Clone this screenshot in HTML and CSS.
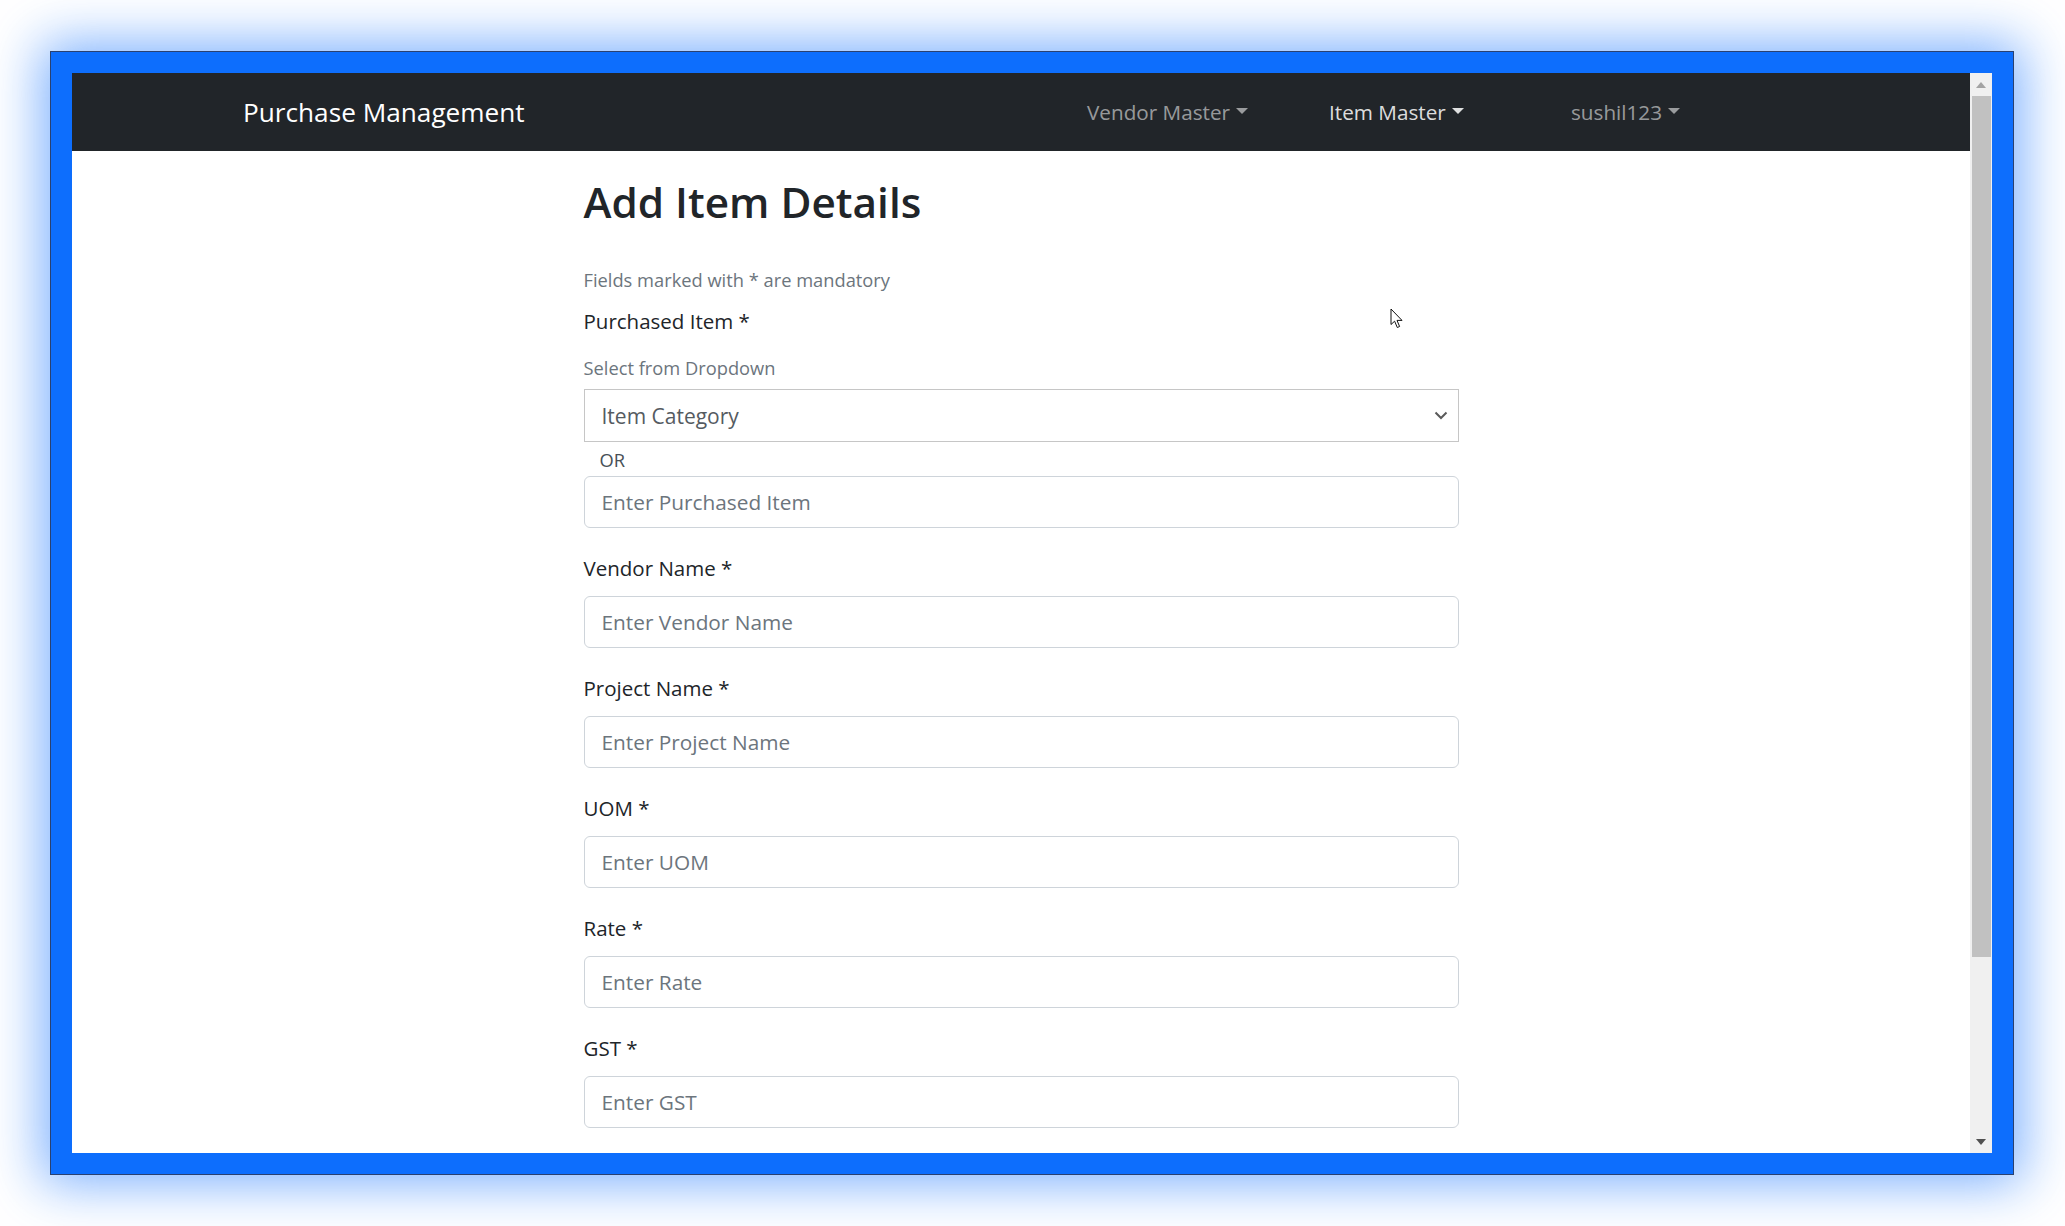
FILE: index.html
```html
<!DOCTYPE html>
<html lang="en">
<head>
<meta charset="utf-8">
<title>Add Item Details</title>
<link rel="stylesheet" href="styles.css">
</head>
<body>
<div class="frame">
  <div class="screen">
    <div class="page">
      <nav class="navbar">
        <a class="brand">Purchase Management</a>
        <ul class="nav">
          <li class="nav-item"><span class="nav-link">Vendor Master<i class="caret"></i></span></li>
          <li class="nav-item"><span class="nav-link active">Item Master<i class="caret"></i></span></li>
          <li class="nav-item"><span class="nav-link">sushil123<i class="caret"></i></span></li>
        </ul>
      </nav>
      <main class="form-col">
        <h2 class="title">Add Item Details</h2>
        <p class="hint">Fields marked with * are mandatory</p>
        <div class="group">
          <label class="label">Purchased Item *</label>
          <div class="subhint">Select from Dropdown</div>
          <div class="select-box">
            <span>Item Category</span>
            <svg class="chev" width="14" height="9" viewBox="0 0 14 9"><path d="M1.5 1.5 L7 7 L12.5 1.5" fill="none" stroke="#5a5a5a" stroke-width="2"/></svg>
          </div>
          <div class="or">OR</div>
          <input class="control" type="text" placeholder="Enter Purchased Item">
        </div>
        <div class="group">
          <label class="label">Vendor Name *</label>
          <input class="control" type="text" placeholder="Enter Vendor Name">
        </div>
        <div class="group">
          <label class="label">Project Name *</label>
          <input class="control" type="text" placeholder="Enter Project Name">
        </div>
        <div class="group">
          <label class="label">UOM *</label>
          <input class="control" type="text" placeholder="Enter UOM">
        </div>
        <div class="group">
          <label class="label">Rate *</label>
          <input class="control" type="text" placeholder="Enter Rate">
        </div>
        <div class="group">
          <label class="label">GST *</label>
          <input class="control" type="text" placeholder="Enter GST">
        </div>
      </main>
      <svg class="cursor" width="14" height="22" viewBox="0 0 14 22"><path d="M1 1 L1 16.5 L4.6 13.2 L7.3 19.5 L9.6 18.5 L7 12.4 L12 12.4 Z" fill="#fff" stroke="#111" stroke-width="1" stroke-linejoin="round"/></svg>
    </div>
    <div class="scrollbar">
      <div class="sb-btn"><i class="tri-up"></i></div>
      <div class="sb-track"><div class="sb-thumb"></div></div>
      <div class="sb-btn"><i class="tri-down"></i></div>
    </div>
  </div>
</div>
</body>
</html>
```
FILE: styles.css
```css
html, body {
  margin: 0;
  padding: 0;
  background: #ffffff;
}
body {
  padding: 51px 50px 51px 50px;
  min-height: 1226px;
  box-sizing: border-box;
  font-family: "Open Sans", "Noto Sans", "Liberation Sans", sans-serif;
  color: #212529;
}
.frame {
  width: 1920px;
  border: 1px solid #2a4170;
  background: #0d6efd;
  padding: 21px;
  box-shadow: 0 0 50px 8px rgba(13, 110, 253, 0.55);
}
.screen {
  width: 1920px;
  height: 1080px;
  display: flex;
  background: #ffffff;
  overflow: hidden;
}
.page {
  flex: 1;
  position: relative;
  overflow: hidden;
}
.navbar {
  height: 78px;
  background: #212529;
  display: flex;
  align-items: center;
  padding: 0 157px 0 171px;
}
.brand {
  color: #ffffff;
  font-size: 26.2px;
  line-height: 1;
  padding-top: 1px;
}
.nav {
  list-style: none;
  margin: 0 0 0 auto;
  padding: 0;
  display: flex;
}
.nav-item {
  width: 242px;
}
.nav-link {
  color: rgba(255, 255, 255, 0.55);
  font-size: 20.7px;
  display: inline-flex;
  align-items: center;
}
.nav-link.active {
  color: rgba(255, 255, 255, 0.86);
}
.caret {
  display: inline-block;
  margin-left: 6px;
  border-top: 6.5px solid currentColor;
  border-left: 6px solid transparent;
  border-right: 6px solid transparent;
  margin-top: -3px;
}
.form-col {
  width: 875px;
  margin: 0 auto;
  padding-top: 24px;
}
.title {
  margin: 0;
  font-size: 42.3px;
  font-weight: 600;
  line-height: 53px;
  color: #212529;
}
.hint {
  margin: 37px 0 0 0;
  font-size: 18.3px;
  line-height: 29px;
  color: #6c757d;
}
.group {
  margin-top: 24px;
}
.hint + .group {
  margin-top: 11px;
}
.label {
  display: block;
  font-size: 20.5px;
  line-height: 33px;
  margin-bottom: 11px;
  color: #212529;
}
.subhint {
  font-size: 18.3px;
  line-height: 29px;
  color: #6c757d;
  margin-top: 15px;
  margin-bottom: 7px;
}
.select-box {
  box-sizing: border-box;
  height: 53px;
  border: 1.5px solid #c6c6c6;
  display: flex;
  align-items: center;
  padding: 0 10px 0 17px;
  font-size: 21px;
  color: #555b61;
}
.chev {
  margin-left: auto;
}
.or {
  height: 34px;
  line-height: 36px;
  padding-left: 16px;
  font-size: 18.3px;
  color: #495057;
}
.control {
  display: block;
  box-sizing: border-box;
  width: 100%;
  height: 52px;
  margin: 0;
  padding: 0 17px;
  border: 1px solid #ced4da;
  border-radius: 6px;
  font-family: "Open Sans", "Noto Sans", "Liberation Sans", sans-serif;
  font-size: 20.8px;
  color: #212529;
  background: #fff;
  outline: none;
}
.control::placeholder {
  color: #6c757d;
}
.cursor {
  position: absolute;
  left: 1318px;
  top: 235px;
}
.scrollbar {
  width: 22px;
  background: #f0f0f0;
  display: flex;
  flex-direction: column;
}
.sb-btn {
  height: 23px;
  display: flex;
  align-items: center;
  justify-content: center;
}
.sb-track {
  flex: 1;
  padding: 0 1px 0 2px;
}
.sb-thumb {
  height: 861px;
  background: #c1c1c1;
}
.tri-up {
  width: 0;
  height: 0;
  border-left: 5.5px solid transparent;
  border-right: 5.5px solid transparent;
  border-bottom: 6px solid #a3a3a3;
}
.tri-down {
  width: 0;
  height: 0;
  border-left: 5.5px solid transparent;
  border-right: 5.5px solid transparent;
  border-top: 6px solid #505050;
  margin-top: 1px;
}
```
